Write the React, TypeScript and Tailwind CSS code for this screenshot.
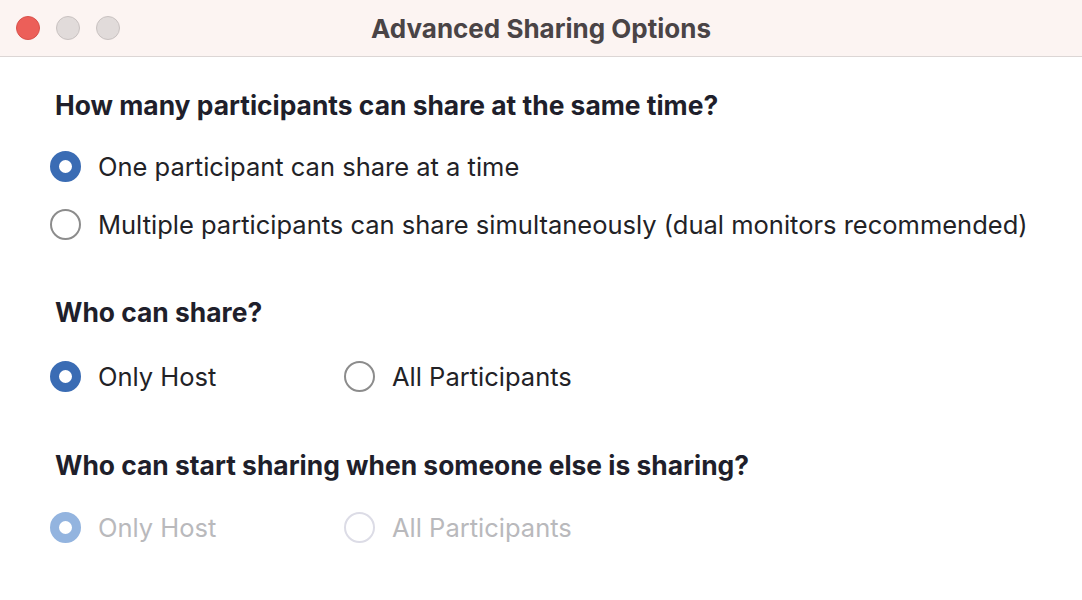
import React from 'react'

type Opt = { label: string; checked?: boolean }

function Radio({ checked, disabled }: { checked?: boolean; disabled?: boolean }) {
  if (checked) {
    return (
      <span
        className={`box-border h-[31px] w-[31px] shrink-0 rounded-full border-[9px] bg-white ${
          disabled ? 'border-[#93b4df]' : 'border-[#3a6cb4]'
        }`}
      />
    )
  }
  return (
    <span
      className={`box-border h-[31px] w-[31px] shrink-0 rounded-full border-2 bg-white ${
        disabled ? 'border-[#dcdce6]' : 'border-[#8c8c8c]'
      }`}
    />
  )
}

function Option({ opt, disabled, width }: { opt: Opt; disabled?: boolean; width?: string }) {
  return (
    <label className={`flex items-center gap-[17px] ${width ?? ''}`}>
      <Radio checked={opt.checked} disabled={disabled} />
      <span className={`text-[25.5px] leading-none ${disabled ? 'text-[#b9b9bc]' : 'text-[#222226]'}`}>
        {opt.label}
      </span>
    </label>
  )
}

function Heading({ children }: { children: React.ReactNode }) {
  return <h2 className="text-[26.4px] font-bold leading-none text-[#1f1f2b]">{children}</h2>
}

export default function App() {
  return (
    <div className="h-[600px] w-[1082px] overflow-hidden bg-white font-['Inter',sans-serif]">
      <div className="relative flex h-[57px] items-center justify-center border-b border-[#dcd6d5] bg-[#fcf4f2]">
        <div className="absolute left-[16px] top-[16px] flex gap-[16px]">
          <span className="h-[24px] w-[24px] rounded-full border border-[#d9514b] bg-[#ec5f59]" />
          <span className="h-[24px] w-[24px] rounded-full border border-[#c9c2c1] bg-[#e1dbda]" />
          <span className="h-[24px] w-[24px] rounded-full border border-[#c9c2c1] bg-[#e1dbda]" />
        </div>
        <h1 className="text-[26px] font-bold text-[#4a4446]">Advanced Sharing Options</h1>
      </div>

      <div className="px-[50px] pt-[35px]">
        <div className="pl-[5px]">
          <Heading>How many participants can share at the same time?</Heading>
        </div>
        <div className="mt-[33px] flex flex-col gap-[27px]">
          <Option opt={{ label: 'One participant can share at a time', checked: true }} />
          <Option opt={{ label: 'Multiple participants can share simultaneously (dual monitors recommended)' }} />
        </div>

        <div className="mt-[59px] pl-[5px]">
          <Heading>Who can share?</Heading>
        </div>
        <div className="mt-[35px] flex">
          <Option width="w-[294px]" opt={{ label: 'Only Host', checked: true }} />
          <Option opt={{ label: 'All Participants' }} />
        </div>

        <div className="mt-[60px] pl-[5px]">
          <Heading>Who can start sharing when someone else is sharing?</Heading>
        </div>
        <div className="mt-[34px] flex">
          <Option disabled width="w-[294px]" opt={{ label: 'Only Host', checked: true }} />
          <Option disabled opt={{ label: 'All Participants' }} />
        </div>
      </div>
    </div>
  )
}
